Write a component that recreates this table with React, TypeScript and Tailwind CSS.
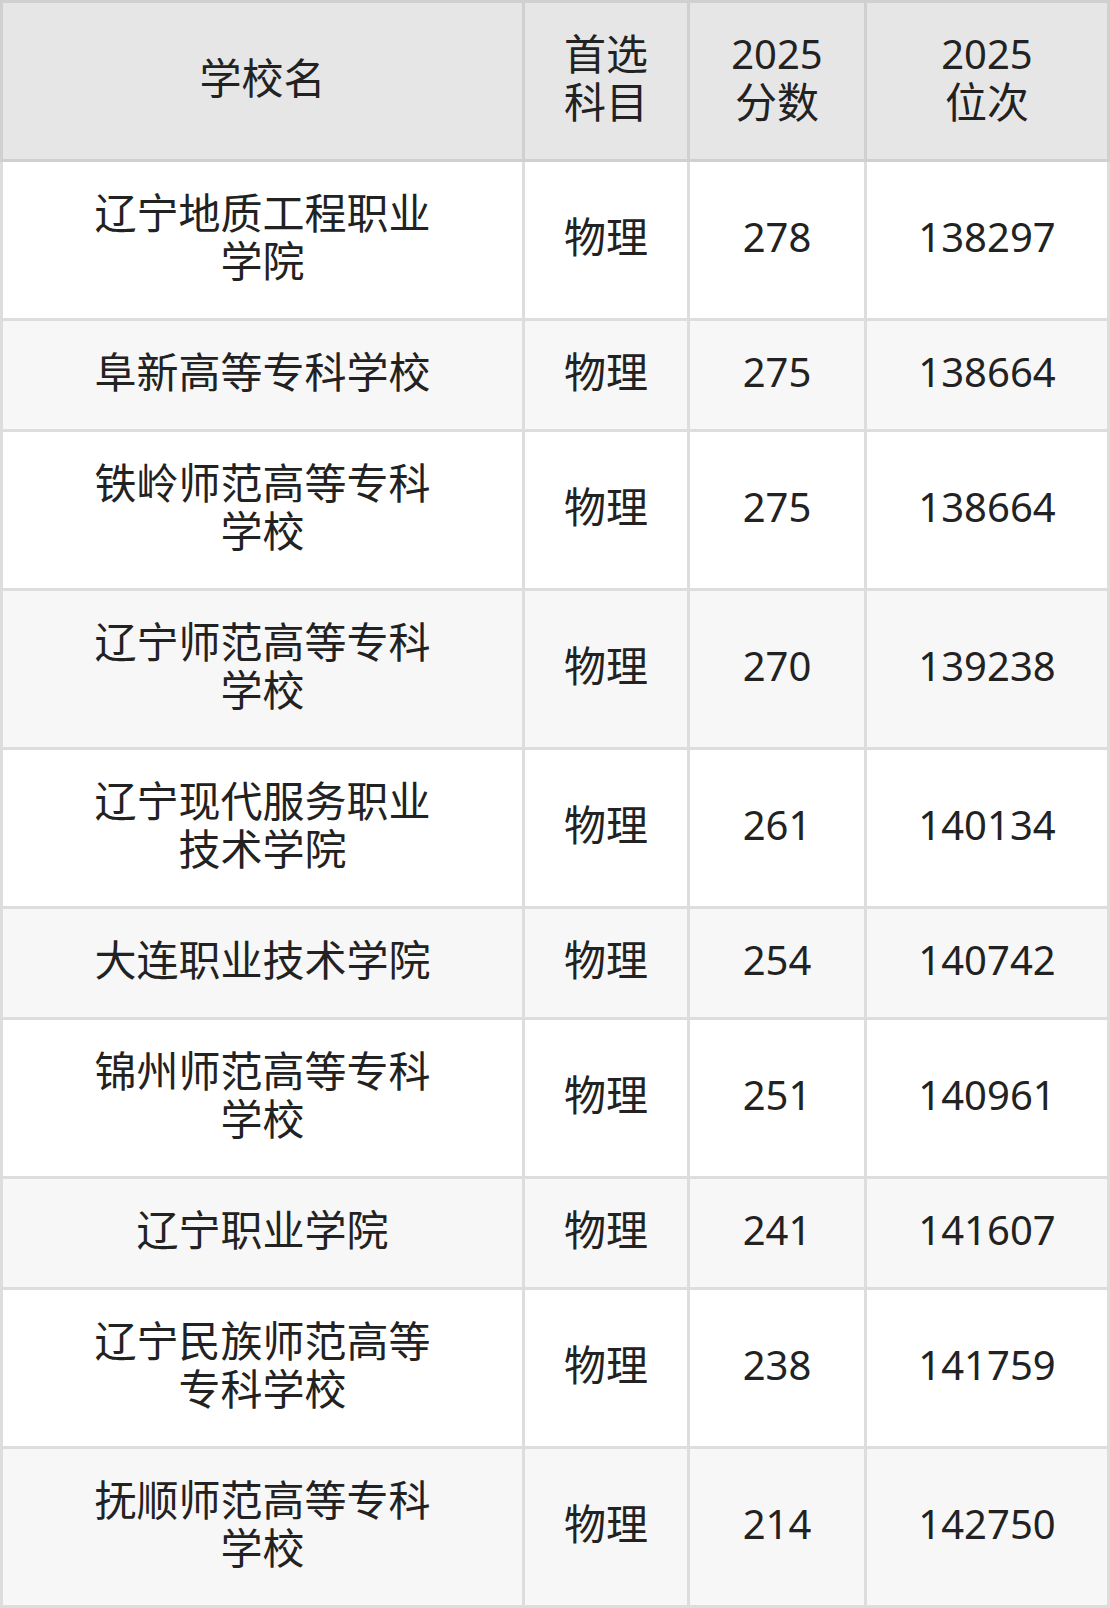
const rows: { name: string[]; subject: string; score: string; rank: string }[] = [
  { name: ["辽宁地质工程职业", "学院"], subject: "物理", score: "278", rank: "138297" },
  { name: ["阜新高等专科学校"], subject: "物理", score: "275", rank: "138664" },
  { name: ["铁岭师范高等专科", "学校"], subject: "物理", score: "275", rank: "138664" },
  { name: ["辽宁师范高等专科", "学校"], subject: "物理", score: "270", rank: "139238" },
  { name: ["辽宁现代服务职业", "技术学院"], subject: "物理", score: "261", rank: "140134" },
  { name: ["大连职业技术学院"], subject: "物理", score: "254", rank: "140742" },
  { name: ["锦州师范高等专科", "学校"], subject: "物理", score: "251", rank: "140961" },
  { name: ["辽宁职业学院"], subject: "物理", score: "241", rank: "141607" },
  { name: ["辽宁民族师范高等", "专科学校"], subject: "物理", score: "238", rank: "141759" },
  { name: ["抚顺师范高等专科", "学校"], subject: "物理", score: "214", rank: "142750" },
];

const font = { fontFamily: '"Noto Sans", "Noto Sans CJK SC", sans-serif' };

function Lines({ items }: { items: string[] }) {
  return (
    <>
      {items.map((t) => (
        <span key={t} className={/^\d+$/.test(t) ? "block text-[40px]" : "block"}>
          {t}
        </span>
      ))}
    </>
  );
}

export default function App() {
  const th = "border-[3px] border-[#d0d0d0] bg-[#e6e6e6] pt-[27px] pb-[33px] text-center font-normal leading-[48px]";
  const td = "border-[3px] border-[#dddddd] pt-[27px] pb-[33px] text-center leading-[48px]";

  return (
    <div className="w-[1110px] bg-white text-[#222222]" style={font}>
      <table className="w-[1110px] table-fixed border-collapse text-[42px]">
        <colgroup>
          <col className="w-[522px]" />
          <col className="w-[165px]" />
          <col className="w-[177px]" />
          <col className="w-[243px]" />
        </colgroup>
        <thead>
          <tr>
            <th className={th}>学校名</th>
            <th className={th}>
              <Lines items={["首选", "科目"]} />
            </th>
            <th className={th}>
              <Lines items={["2025", "分数"]} />
            </th>
            <th className={th}>
              <Lines items={["2025", "位次"]} />
            </th>
          </tr>
        </thead>
        <tbody>
          {rows.map((r, i) => (
            <tr key={i} className={i % 2 === 1 ? "bg-[#f7f7f7]" : "bg-white"}>
              <td className={td}>
                <Lines items={r.name} />
              </td>
              <td className={td}>{r.subject}</td>
              <td className={`${td} text-[40px]`}>{r.score}</td>
              <td className={`${td} text-[40px]`}>{r.rank}</td>
            </tr>
          ))}
        </tbody>
      </table>
    </div>
  );
}
